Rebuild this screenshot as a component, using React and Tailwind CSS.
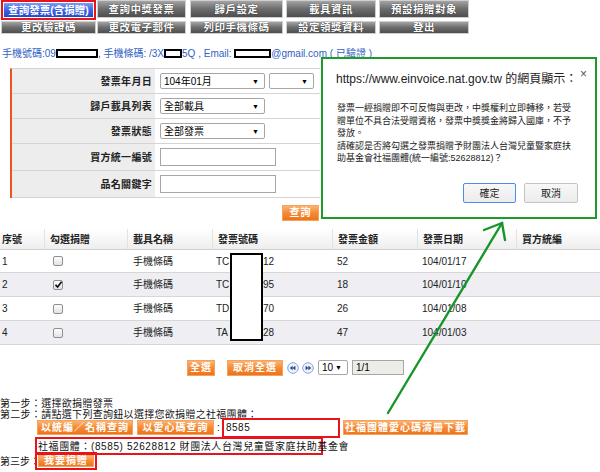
import React from "react";

const FONT = "font-['Liberation_Sans','Noto_Sans_CJK_TC',sans-serif]";

function GrayBtn({ className = "", children }) {
  return (
    <div
      className={`flex items-center justify-center bg-linear-to-b from-[#a4a4a4] via-[#6c6c6c] to-[#4e4e4e] border border-[#d0d0d0] text-white font-bold text-[10.5px] leading-none tracking-[0.5px] whitespace-nowrap [text-shadow:0_0_1px_#000] ${className}`}
    >
      {children}
    </div>
  );
}

function OrangeBtn({ className = "", children }) {
  return (
    <div
      className={`flex items-center justify-center bg-linear-to-b from-[#fbb36f] via-[#f58a34] to-[#ef7317] border border-[#f3a35e] text-white font-bold text-[10px] leading-none tracking-[1px] whitespace-nowrap ${className}`}
    >
      {children}
    </div>
  );
}

function Select({ className = "", value = "" }) {
  return (
    <div
      className={`flex items-center justify-between bg-white border border-[#a6a6a6] rounded-[2px] pl-[3px] pr-[5px] text-[10px] text-black ${className}`}
    >
      <span>{value}</span>
      <span className="text-[7px] leading-none">▼</span>
    </div>
  );
}

function Box({ className = "" }) {
  return (
    <span
      className={`inline-block h-[9px] border-2 border-black bg-white align-[-1px] ${className}`}
    />
  );
}

function PageIcon({ dir }) {
  return (
    <svg width="12" height="12" viewBox="0 0 12 12">
      <circle cx="6" cy="6" r="5.3" fill="#eef2fc" stroke="#8aa3d8" strokeWidth="1" />
      {dir === "left" ? (
        <g fill="#1f3f9a">
          <polygon points="2.8,6 5.6,3.8 5.6,8.2" />
          <polygon points="5.6,6 8.4,3.8 8.4,8.2" />
        </g>
      ) : (
        <g fill="#1f3f9a">
          <polygon points="9.2,6 6.4,3.8 6.4,8.2" />
          <polygon points="6.4,6 3.6,3.8 3.6,8.2" />
        </g>
      )}
    </svg>
  );
}

function CheckBox({ checked }) {
  return (
    <span className="relative inline-flex w-[10px] h-[10px] rounded-[2px] border border-[#8f8f8f] bg-linear-to-b from-[#fdfdfd] to-[#e3e3e3] items-center justify-center">
      {checked && (
        <svg width="9" height="9" viewBox="0 0 9 9" className="absolute">
          <path d="M1.5 4.8 L3.6 7 L7.6 1.8" fill="none" stroke="#111" strokeWidth="1.7" />
        </svg>
      )}
    </span>
  );
}

const rows = [
  { n: "1", pre: "TC", post: "12", amt: "52", date: "104/01/17", checked: false },
  { n: "2", pre: "TC", post: "95", amt: "18", date: "104/01/10", checked: true },
  { n: "3", pre: "TD", post: "70", amt: "26", date: "104/01/08", checked: false },
  { n: "4", pre: "TA", post: "28", amt: "47", date: "104/01/03", checked: false },
];

const GRID = "grid grid-cols-[45px_83px_85px_120px_85px_99px_83px]";

export default function App() {
  return (
    <div className={`relative w-[600px] h-[472px] overflow-hidden bg-white ${FONT}`}>
      {/* Top menu */}
      <div className="flex items-start h-[20px]">
        <div className="ml-[1px] w-[95px] h-[20px] border-2 border-[#e8141c] p-[1px]">
          <div className="h-full flex items-center justify-center bg-linear-to-b from-[#7d9cf6] via-[#3c64e4] to-[#2448c8] text-white font-bold text-[10.5px] leading-none whitespace-nowrap">
            查詢發票(含捐贈)
          </div>
        </div>
        <GrayBtn className="ml-[1px] w-[89px] h-[18px]">查詢中獎發票</GrayBtn>
        <GrayBtn className="ml-[4px] w-[93px] h-[18px]">歸戶設定</GrayBtn>
        <GrayBtn className="ml-[3px] w-[90px] h-[18px]">載具資訊</GrayBtn>
        <GrayBtn className="ml-[3px] w-[90px] h-[18px]">預設捐贈對象</GrayBtn>
      </div>
      <div className="flex items-start h-[14px] mt-[1px]">
        <GrayBtn className="ml-[1px] w-[95px] h-[13px]">更改驗證碼</GrayBtn>
        <GrayBtn className="ml-[1px] w-[89px] h-[13px]">更改電子郵件</GrayBtn>
        <GrayBtn className="ml-[4px] w-[93px] h-[13px]">列印手機條碼</GrayBtn>
        <GrayBtn className="ml-[3px] w-[90px] h-[13px]">設定領獎資料</GrayBtn>
        <GrayBtn className="ml-[3px] w-[90px] h-[13px]">登出</GrayBtn>
      </div>

      {/* Info line */}
      <div className="mt-[13px] h-[12px] pl-[2px] text-[10px] leading-[12px] text-[#2f5fc4] whitespace-nowrap">
        手機號碼:09
        <Box className="w-[42px]" />, 手機條碼: /3X
        <Box className="w-[18px]" />
        5Q , Email: <Box className="w-[37px]" />
        @gmail.com ( 已驗證 )
      </div>

      {/* Search form */}
      <div className="mt-[8px] ml-[10px] w-[310px]">
        <div className="border-l-2 border-[#f0531f] border-t border-t-[#d4d4d4]">
          {[
            {
              label: "發票年月日",
              h: "h-[25px]",
              content: (
                <>
                  <Select className="w-[105px] h-[16px]" value="104年01月" />
                  <Select className="ml-[4px] w-[45px] h-[16px]" />
                </>
              ),
            },
            {
              label: "歸戶載具列表",
              h: "h-[25px]",
              content: <Select className="w-[105px] h-[16px]" value="全部載具" />,
            },
            {
              label: "發票狀態",
              h: "h-[25px]",
              content: <Select className="w-[105px] h-[16px]" value="全部發票" />,
            },
            {
              label: "買方統一編號",
              h: "h-[27px]",
              content: <div className="w-[116px] h-[18px] border border-[#a6a6a6] bg-white" />,
            },
            {
              label: "品名關鍵字",
              h: "h-[27px]",
              content: <div className="w-[116px] h-[18px] border border-[#a6a6a6] bg-white" />,
            },
          ].map((r, i) => (
            <div key={i} className={`flex ${r.h} border-b border-[#d4d4d4]`}>
              <div className="w-[143px] bg-[#ededed] flex items-center justify-end pr-[3px] text-[10px] font-bold text-[#222] tracking-[0.3px]">
                {r.label}
              </div>
              <div className="flex-1 flex items-center pl-[5px] bg-white">{r.content}</div>
            </div>
          ))}
        </div>
        <div className="flex justify-end mt-[7px] pr-[1px]">
          <OrangeBtn className="w-[37px] h-[16px]">查詢</OrangeBtn>
        </div>
      </div>

      {/* Table */}
      <div className="relative mt-[8px]">
        <div className={`${GRID} h-[21px] bg-linear-to-b from-white to-[#eeeeee] border-b border-[#cfcfcf] text-[10px] font-bold text-[#222]`}>
          {["序號", "勾選捐贈", "載具名稱", "發票號碼", "發票金額", "發票日期", "買方統編"].map((h, i) => (
            <div
              key={i}
              className={`flex items-center ${i === 0 ? "pl-[2px]" : "pl-[5px]"} ${i < 6 ? "border-r border-[#e2e2e2]" : ""}`}
            >
              {h}
            </div>
          ))}
        </div>
        {rows.map((r, i) => (
          <div
            key={i}
            className={`${GRID} ${i === 0 ? "h-[23px]" : "h-[24px]"} ${i % 2 === 1 ? "bg-[#eeeef3]" : "bg-white"} border-b border-[#d6d6d6] text-[10px] text-[#222]`}
          >
            <div className="flex items-center pl-[2px]">{r.n}</div>
            <div className="flex items-center pl-[8px]">
              <CheckBox checked={r.checked} />
            </div>
            <div className="flex items-center pl-[5px]">手機條碼</div>
            <div className="flex items-center pl-[3px]">
              <span className="w-[47px]">{r.pre}</span>
              <span>{r.post}</span>
            </div>
            <div className="flex items-center pl-[4px]">{r.amt}</div>
            <div className="flex items-center pl-[4px]">{r.date}</div>
            <div />
          </div>
        ))}
        {/* redaction box */}
        <div className="absolute left-[230px] top-[24px] w-[33px] h-[88px] border-2 border-black bg-white" />
      </div>

      {/* Pagination */}
      <div className="mt-[14px] h-[17px] flex items-center text-[10px]">
        <OrangeBtn className="ml-[187px] w-[28px] h-[16px]">全選</OrangeBtn>
        <OrangeBtn className="ml-[12px] w-[56px] h-[16px]">取消全選</OrangeBtn>
        <div className="ml-[4px] flex items-center">
          <PageIcon dir="left" />
        </div>
        <div className="ml-[3px] flex items-center">
          <PageIcon dir="right" />
        </div>
        <Select className="ml-[4px] w-[30px] h-[15px]" value="10" />
        <div className="ml-[4px] w-[52px] h-[15px] border border-[#a6a6a6] bg-[#ecece8] flex items-center pl-[3px] text-[10px]">
          1/1
        </div>
      </div>

      {/* Steps */}
      <div className="mt-[22px] text-[10px] leading-[11px] text-[#111] tracking-[0.3px]">
        <div className="h-[11px] whitespace-nowrap">第一步：選擇欲捐贈發票</div>
        <div className="h-[11px] whitespace-nowrap">第二步：請點選下列查詢鈕以選擇您欲捐贈之社福團體：</div>
        <div className="flex items-center h-[19px] -mt-[2px]">
          <OrangeBtn className="ml-[37px] w-[96px] h-[15px]">以統編／名稱查詢</OrangeBtn>
          <OrangeBtn className="ml-[4px] w-[77px] h-[15px]">以愛心碼查詢</OrangeBtn>
          <span className="ml-[3px] w-[5px]">:</span>
          <div className="w-[118px] h-[20px] border-2 border-[#e8141c] bg-white flex items-center pl-[2px] text-[10px] tracking-[0.5px]">
            8585
          </div>
          <OrangeBtn className="ml-[3px] w-[125px] h-[15px]">社福團體愛心碼清冊下載</OrangeBtn>
        </div>
        <div className="ml-[35px] w-[288px] h-[18px] border-2 border-[#e8141c] flex items-center pl-[1px] text-[10px] tracking-[0.6px] whitespace-nowrap">
          社福團體：(8585) 52628812 財團法人台灣兒童暨家庭扶助基金會
        </div>
        <div className="flex items-center -mt-[3px] h-[18px]">
          <span className="w-[35px] whitespace-nowrap tracking-[0px]">第三步：</span>
          <div className="w-[62px] h-[18px] border-2 border-[#e8141c] p-[1px]">
            <OrangeBtn className="w-full h-full">我要捐贈</OrangeBtn>
          </div>
        </div>
      </div>

      {/* Browser dialog (annotated with green frame) */}
      <div className="absolute left-[321px] top-[57px] w-[276px] h-[162px] border-2 border-[#1e9a2c] bg-white">
        <div className="relative h-full">
          <div className="absolute left-[13px] top-[13px] text-[12px] leading-[14px] text-[#222] whitespace-nowrap">
            https://www.einvoice.nat.gov.tw 的網頁顯示：
          </div>
          <div className="absolute right-[8px] top-[9px] text-[12px] leading-[12px] text-[#555]">×</div>
          <div className="absolute left-[14px] top-[43px] text-[9px] leading-[12.6px] text-[#222] whitespace-nowrap">
            <div>發票一經捐贈即不可反悔與更改，中獎權利立即轉移，若受</div>
            <div>贈單位不具合法受贈資格，發票中獎獎金將歸入國庫，不予</div>
            <div>發放。</div>
            <div>請確認是否將勾選之發票捐贈予財團法人台灣兒童暨家庭扶</div>
            <div>助基金會社福團體(統一編號:52628812)？</div>
          </div>
          <div className="absolute left-[140px] top-[124px] flex gap-[8px]">
            <div className="w-[53px] h-[20px] rounded-[2px] border border-[#4d8cf0] bg-linear-to-b from-[#f8f8f8] to-[#ececec] flex items-center justify-center text-[10px] text-[#222]">
              確定
            </div>
            <div className="w-[54px] h-[20px] rounded-[2px] border border-[#c4c4c4] bg-linear-to-b from-[#f8f8f8] to-[#ececec] flex items-center justify-center text-[10px] text-[#222]">
              取消
            </div>
          </div>
        </div>
      </div>

      {/* Green annotation arrow */}
      <svg className="absolute left-0 top-0 pointer-events-none" width="600" height="472" viewBox="0 0 600 472">
        <g stroke="#16962a" strokeWidth="2.4" fill="none" strokeLinecap="round">
          <line x1="388" y1="413" x2="502" y2="223" />
          <line x1="502" y1="223" x2="484" y2="230" />
          <line x1="502" y1="223" x2="505" y2="240" />
        </g>
      </svg>
    </div>
  );
}
